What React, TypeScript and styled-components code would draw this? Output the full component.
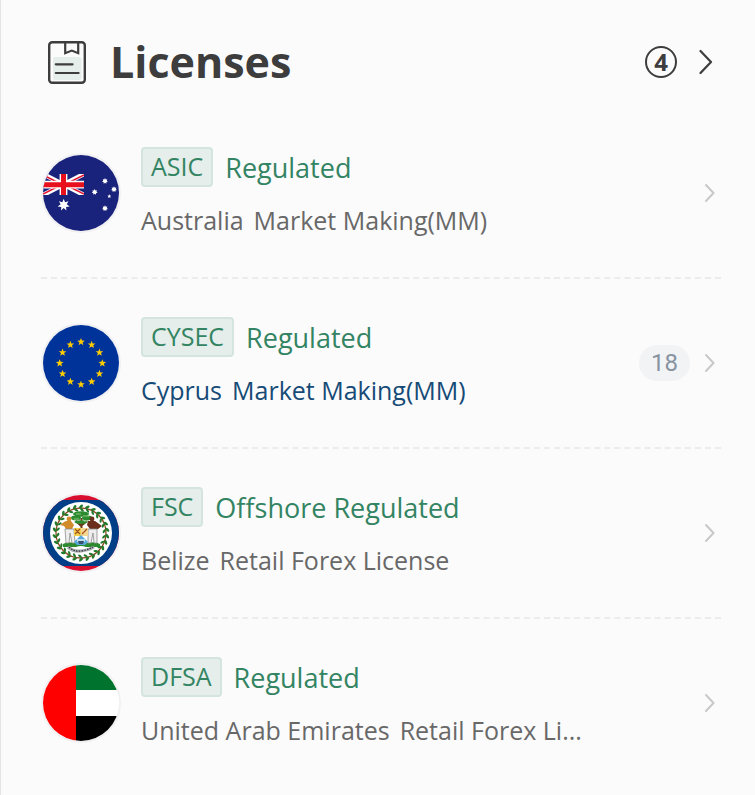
import React from "react";
import styled, { createGlobalStyle } from "styled-components";

const GlobalStyle = createGlobalStyle`
  * { box-sizing: border-box; }
  body {
    margin: 0;
    background: #fbfbfb;
    font-family: "Open Sans", "Noto Sans", sans-serif;
  }
`;

const Panel = styled.main`
  min-height: 100vh;
  padding: 16px 34px 0 40px;
  border-left: 1px solid #e4e4e4;
  background: #fbfbfb;
`;

const Header = styled.header`
  display: flex;
  align-items: center;
  height: 93px;
  padding: 0 8px 1px 6px;
`;

const Title = styled.h1`
  flex: 1;
  margin: 0 0 0 23px;
  color: #3d3d3d;
  font-size: 43px;
  line-height: 60px;
  font-weight: 700;
`;

const Count = styled.span`
  display: flex;
  align-items: center;
  justify-content: center;
  width: 32px;
  height: 32px;
  border: 2px solid #3d3d3d;
  border-radius: 50%;
  color: #3d3d3d;
  font-size: 24px;
  line-height: 28px;
  font-weight: 700;
`;

const IconButton = styled.button`
  display: flex;
  flex: none;
  margin: 0 0 0 22px;
  padding: 0;
  border: 0;
  background: none;
  cursor: pointer;
`;

const RowButton = styled(IconButton)`
  margin-left: 15px;
`;

const List = styled.ul`
  margin: 0;
  padding: 0;
  list-style: none;
`;

const Row = styled.li`
  display: flex;
  align-items: center;
  height: 170px;
  padding-right: 6px;
  border-bottom: 2px dashed #ececec;
  &:last-child {
    border-bottom-color: transparent;
  }
`;

const FlagFrame = styled.span`
  flex: none;
  width: 80px;
  height: 80px;
  border: 2px solid #f1f1f3;
  border-radius: 50%;
  overflow: hidden;
  svg { display: block; }
`;

const Info = styled.div`
  flex: 1;
  min-width: 0;
  margin-left: 20px;
`;

const StatusLine = styled.div`
  display: flex;
  align-items: center;
  gap: 12px;
  height: 40px;
`;

const Tag = styled.span`
  height: 40px;
  padding: 0 8px;
  border: 2px solid #d3e5de;
  border-radius: 4px;
  background: #e5eeea;
  color: #338463;
  font-size: 25px;
  line-height: 35px;
`;

const Status = styled.span`
  padding-top: 2px;
  color: #338463;
  font-size: 27px;
  line-height: 38px;
`;

const Detail = styled.div<{ $active?: boolean }>`
  display: flex;
  gap: 10px;
  margin-top: 16px;
  padding-bottom: 2px;
  color: ${(p) => (p.$active ? "#164b77" : "#686868")};
  font-size: 25px;
  line-height: 34px;
  white-space: nowrap;
`;

const Badge = styled.span`
  padding: 0 12px;
  border-radius: 18px;
  background: #f1f3f5;
  color: #8793a1;
  font-family: Roboto, sans-serif;
  font-size: 24px;
  line-height: 36px;
`;

function star(cx: number, cy: number, r: number, n = 5, inner = 0.4) {
  return Array.from({ length: n * 2 }, (_, i) => {
    const a = (Math.PI * i) / n - Math.PI / 2;
    const d = i % 2 ? r * inner : r;
    return `${(cx + d * Math.cos(a)).toFixed(2)},${(cy + d * Math.sin(a)).toFixed(2)}`;
  }).join(" ");
}

const Flag = ({ name, children }: { name: string; children: React.ReactNode }) => (
  <svg width="76" height="76" viewBox="0 0 76 76" role="img" aria-label={name}>
    {children}
  </svg>
);

const Australia = () => (
  <Flag name="Australia">
    <path fill="#1a237b" d="M0 0h76v76H0z" />
    <svg x="0" y="19" width="41" height="21" viewBox="0 0 41 21">
      <path d="M0 0L41 21M41 0L0 21" stroke="#fff" strokeWidth="4.6" />
      <path d="M0 1L17 9.5M24 11.5L41 20M41 1L24 9.5M17 11.5L0 20" stroke="#e8112d" strokeWidth="1.5" />
      <path d="M20.5 0V21M0 10.7H41" stroke="#fff" strokeWidth="7.8" />
      <path d="M20.5 0V21M0 10.7H41" stroke="#e8101c" strokeWidth="5" />
    </svg>
    <g fill="#fff">
      <polygon points={star(20.7, 50, 6.2, 7, 0.5)} />
      <polygon points={star(62, 26, 3, 7, 0.6)} />
      <polygon points={star(71, 34.3, 3, 7, 0.6)} />
      <polygon points={star(51.7, 37, 3, 7, 0.6)} />
      <polygon points={star(62, 53.3, 3, 7, 0.6)} />
      <polygon points={star(66.3, 41.3, 2, 5, 0.5)} />
    </g>
  </Flag>
);

const Europe = () => (
  <Flag name="European Union">
    <path fill="#039" d="M0 0h76v76H0z" />
    {Array.from({ length: 12 }, (_, i) => {
      const a = (Math.PI * i) / 6;
      return (
        <polygon
          key={i}
          fill="#fc0"
          points={star(38 + 21.3 * Math.cos(a), 38.2 + 21.3 * Math.sin(a), 4, 5, 0.42)}
        />
      );
    })}
  </Flag>
);

const Belize = () => (
  <Flag name="Belize">
    <path fill="#d90f2f" d="M0 0h76v76H0z" />
    <path fill="#003f87" d="M0 5h76v66H0z" />
    <circle cx="38" cy="38" r="31" fill="#fff" />
    <circle cx="38" cy="38" r="25" fill="none" stroke="#8a4a20" strokeWidth="1.3" />
    {Array.from({ length: 26 }, (_, i) => (
      <g key={i} transform={`rotate(${(i * 360) / 26} 38 38)`} fill="#1f7a2c">
        <ellipse cx="38" cy="11.4" rx="2.4" ry="1.3" transform="rotate(-40 38 11.4)" />
        <ellipse cx="39" cy="14.8" rx="2.2" ry="1.1" transform="rotate(40 39 14.8)" />
      </g>
    ))}
    <path stroke="#6b3b16" strokeWidth="2" fill="none" d="M38.5 23V37M33 26l5 5 6-5" />
    <g fill="#2c8a2f">
      <ellipse cx="38" cy="19" rx="8" ry="2.8" />
      <ellipse cx="33" cy="23" rx="5" ry="2.4" />
      <ellipse cx="44" cy="23" rx="5" ry="2.4" />
      <ellipse cx="38" cy="27" rx="6.5" ry="1.8" />
      <path d="M20 49q5-3 10-1h16q6-2 11 1v3H43q-5-2-10 0H20z" />
    </g>
    <path d="M33 19h5M40 21h6M31 24h5M41 26h5" stroke="#a6d397" strokeWidth="0.8" />
    <g fill="#d18a2c">
      <circle cx="26" cy="24" r="2.4" />
      <path d="M23 26h5l3 4-2 4h-6l-2-3-4-1 4-3z" />
    </g>
    <g fill="#6b2f1b">
      <circle cx="49" cy="24" r="2.4" />
      <path d="M45 26h7l7 5-4 3h-8l-3-4z" />
    </g>
    <path d="M22 34h9l1 14h-3l-2-10-1 10h-3zM45 34h9v14h-3l-1-10-2 10h-3z" fill="#eee" stroke="#8b8b8b" strokeWidth="0.8" />
    <path d="M31 33h14v8H31z" fill="#f1d14a" />
    <path d="M38 33h7v8h-7z" fill="#f4d790" />
    <path d="M32 34l5 5m0-5l-5 5M39 39l5-5" stroke="#a35121" strokeWidth="1.2" />
    <path d="M31 47l7-7 7 7-3 3h-8z" fill="#57a9dc" />
    <path d="M34 44h8v3h-8z" fill="#b9dcee" />
    <path d="M35 46h6l-1 3h-4z" fill="#36506d" />
    <path d="M25 52q5 5 13 4t13-4" fill="none" stroke="#aab0b4" strokeWidth="3.2" />
    <path d="M26 52q5 5 12 4t12-4" fill="none" stroke="#333" strokeWidth="1.2" strokeDasharray="1.5 1.2" />
  </Flag>
);

const Emirates = () => (
  <Flag name="United Arab Emirates">
    <path fill="#fff" d="M0 0h76v76H0z" />
    <path fill="#00732f" d="M33 0h43v25H33z" />
    <path fill="#000" d="M33 51h43v25H33z" />
    <path fill="#f00" d="M0 0h33v76H0z" />
  </Flag>
);

const LicenseIcon = () => (
  <svg width="40" height="46" viewBox="0 0 40 46" fill="none" aria-hidden="true">
    <rect x="6" y="18" width="28.5" height="23" rx="2" fill="#e5eeea" />
    <rect x="2.2" y="3.2" width="35.6" height="40.6" rx="3" stroke="#3d3d3d" strokeWidth="2.4" />
    <path d="M18.2 3.5V14.2L24.8 11.6L31.2 14.2V3.5" stroke="#3d3d3d" strokeWidth="2.2" />
    <path d="M8.8 25.3H25.6M8.8 34H31.6" stroke="#3d3d3d" strokeWidth="2.2" strokeLinecap="round" />
  </svg>
);

const Chevron = () => (
  <svg width="10" height="20" viewBox="0 0 10 20" fill="none" aria-hidden="true">
    <path d="M1 2L8.5 10L1 18" stroke="#c8c8c8" strokeWidth="2" strokeLinecap="round" strokeLinejoin="round" />
  </svg>
);

const licenses = [
  { flag: <Australia />, tag: "ASIC", status: "Regulated", country: "Australia", type: "Market Making(MM)" },
  { flag: <Europe />, tag: "CYSEC", status: "Regulated", country: "Cyprus", type: "Market Making(MM)", count: 18, active: true },
  { flag: <Belize />, tag: "FSC", status: "Offshore Regulated", country: "Belize", type: "Retail Forex License" },
  { flag: <Emirates />, tag: "DFSA", status: "Regulated", country: "United Arab Emirates", type: "Retail Forex Li..." },
];

export default function App() {
  return (
    <>
      <GlobalStyle />
      <Panel>
        <Header>
          <LicenseIcon />
          <Title>Licenses</Title>
          <Count>4</Count>
          <IconButton type="button" aria-label="All licenses">
            <svg width="14" height="26" viewBox="0 0 14 26" fill="none" aria-hidden="true">
              <path d="M1.5 2L12 13L1.5 24" stroke="#3d3d3d" strokeWidth="2.2" strokeLinecap="round" strokeLinejoin="round" />
            </svg>
          </IconButton>
        </Header>
        <List>
          {licenses.map((l) => (
            <Row key={l.tag}>
              <FlagFrame>{l.flag}</FlagFrame>
              <Info>
                <StatusLine>
                  <Tag>{l.tag}</Tag>
                  <Status>{l.status}</Status>
                </StatusLine>
                <Detail $active={l.active}>
                  <span>{l.country}</span>
                  <span>{l.type}</span>
                </Detail>
              </Info>
              {l.count && <Badge>{l.count}</Badge>}
              <RowButton type="button" aria-label={`${l.tag} details`}>
                <Chevron />
              </RowButton>
            </Row>
          ))}
        </List>
      </Panel>
    </>
  );
}
